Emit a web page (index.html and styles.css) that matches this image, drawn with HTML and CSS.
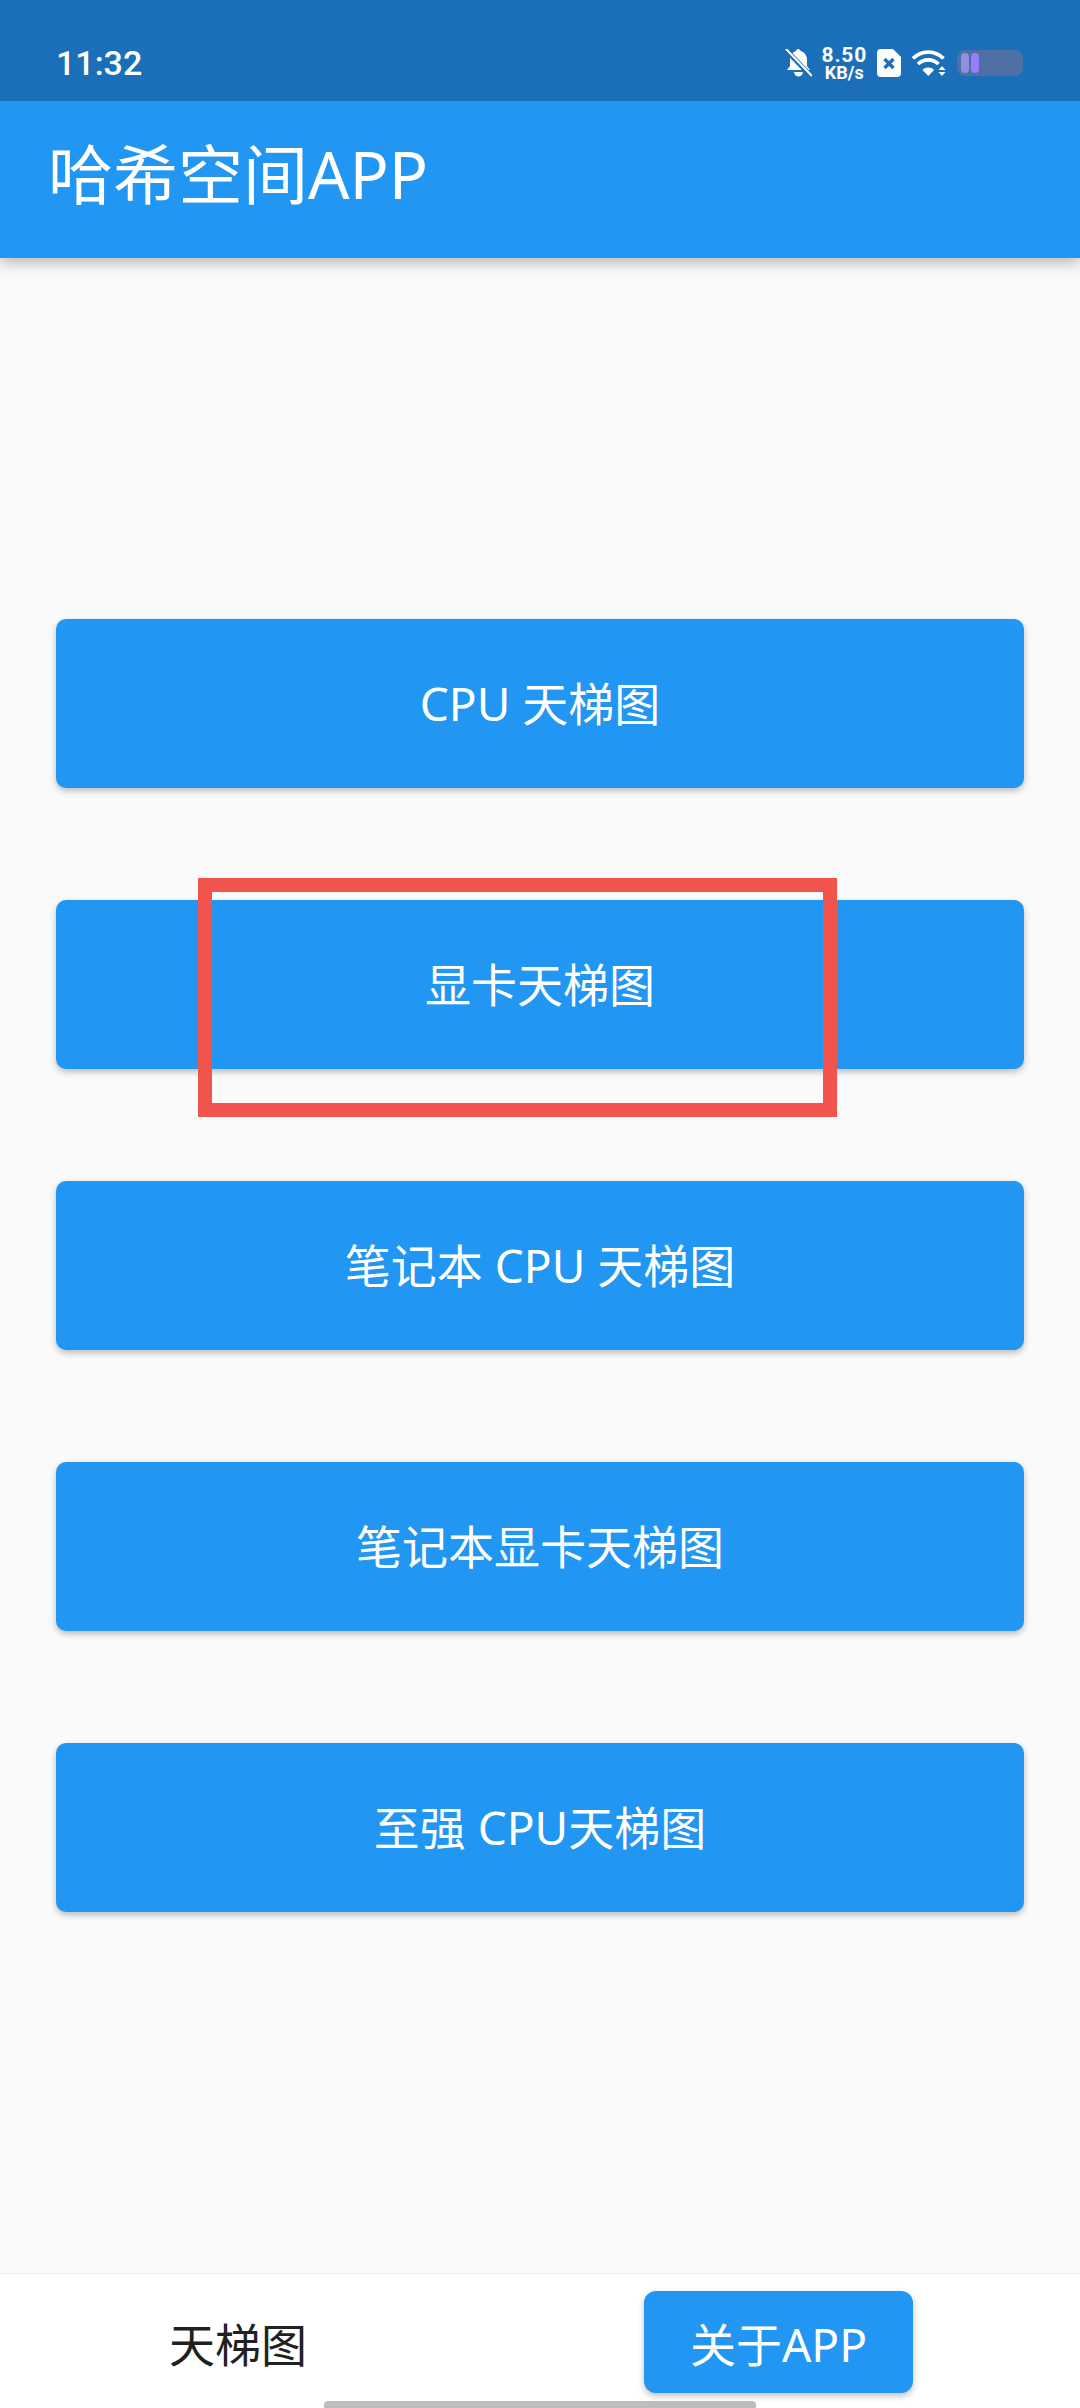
FILE: index.html
```html
<!DOCTYPE html>
<html lang="zh-CN">
<head>
  <meta charset="UTF-8">
  <meta name="viewport" content="width=device-width, initial-scale=1.0">
  <title>哈希空间APP</title>
  <link rel="stylesheet" href="styles.css">
</head>
<body>
  <div class="app">
    <header class="header">
      <div class="statusbar">
        <span class="time">11:32</span>
        <div class="status-icons">
          <svg class="ic-bell" width="27" height="28" viewBox="0 0 27 28">
            <path d="M13 0c1.500 0 2.500 1 2.500 2 4 1 6.500 4.500 6.500 9v6l3 4H2l3-4v-6c0-4.500 2.500-8 6-9 0-1 1-2 2-2zM9 23h9c-.5 3-2.500 4.500-4.500 4.500S9.500 26 9 23z" fill="#fff"/>
            <path d="M1 1l25 26" stroke="#1a6fb8" stroke-width="5"/>
            <path d="M1 0l26 27" stroke="#fff" stroke-width="2"/>
          </svg>
          <div class="speed"><span class="speed-num">8.50</span><span class="speed-unit">KB/s</span></div>
          <svg class="ic-sim" width="24" height="28" viewBox="0 0 24 28">
            <path d="M4 0h12l8 8v16a4 4 0 0 1-4 4H4a4 4 0 0 1-4-4V4a4 4 0 0 1 4-4z" fill="#fff"/>
            <path d="M7.500 10l9 9M16.500 10l-9 9" stroke="#1a6fb8" stroke-width="3.400"/>
          </svg>
          <svg class="ic-wifi" width="36" height="28" viewBox="0 0 36 28">
            <path d="M2 9.500c8.500-8.500 22-8.500 30.500 0" fill="none" stroke="#fff" stroke-width="3.800"/>
            <path d="M7 15c5.500-5.500 15-5.500 20.500 0" fill="none" stroke="#fff" stroke-width="3.800"/>
            <path d="M11.500 21c3-3.200 8.500-3.200 11.500 0l-5.700 6z" fill="#fff"/>
            <path d="M27.500 21l3.500-4 3.500 4zM27.500 23h7l-3.500 4z" fill="#fff"/>
          </svg>
          <div class="battery">
            <span class="battery-cell"></span>
            <span class="battery-cell battery-cell-on"></span>
          </div>
        </div>
      </div>
      <div class="toolbar">哈希空间APP</div>
    </header>

    <main class="content">
      <button class="btn" type="button">CPU 天梯图</button>
      <button class="btn" type="button">显卡天梯图</button>
      <button class="btn" type="button">笔记本 CPU 天梯图</button>
      <button class="btn" type="button">笔记本显卡天梯图</button>
      <button class="btn" type="button">至强 CPU天梯图</button>
      <div class="highlight"></div>
    </main>

    <nav class="bottom-nav">
      <div class="tab">天梯图</div>
      <div class="tab-active">关于APP</div>
      <div class="home-bar"></div>
    </nav>
  </div>
</body>
</html>
```

FILE: styles.css
```css
* {
  box-sizing: border-box;
}

body {
  margin: 0;
  background-color: #fafafa;
  font-family: "Noto Sans", "Noto Sans CJK SC", sans-serif;
}

.app {
  width: 1080px;
  height: 2408px;
  display: flex;
  flex-direction: column;
  overflow: hidden;
}

.header {
  height: 258px;
  background-color: #2196f3;
  box-shadow: 0 4px 14px rgba(0, 0, 0, 0.3);
  position: relative;
  z-index: 1;
  color: #fff;
}

.statusbar {
  height: 101px;
  background-color: #1a6fb8;
  display: flex;
  align-items: center;
  justify-content: space-between;
  padding: 25px 57px 0 56px;
}

.time {
  font-family: Roboto, sans-serif;
  font-size: 34px;
  font-weight: 500;
}

.status-icons {
  display: flex;
  align-items: center;
}

.ic-bell {
  margin-right: 10px;
}

.speed {
  display: flex;
  flex-direction: column;
  align-items: center;
  font-family: Roboto, sans-serif;
  font-weight: 700;
  line-height: 1;
  margin-right: 10px;
}

.speed-num {
  font-size: 21px;
  letter-spacing: 0.8px;
}

.speed-unit {
  font-size: 18px;
  margin-top: -2px;
}

.ic-sim {
  margin-right: 10px;
}

.ic-wifi {
  margin-right: 10px;
}

.battery {
  width: 66px;
  height: 26px;
  background-color: #4e70a4;
  border-radius: 8px;
  display: flex;
  gap: 2px;
  padding: 3px 4px;
}

.battery-cell {
  width: 8px;
  background-color: #8f90e0;
  border-radius: 4px;
}

.battery-cell-on {
  background-color: #9b7bff;
}

.toolbar {
  height: 157px;
  padding-left: 48px;
  font-size: 65px;
  line-height: 146px;
}

.content {
  flex: 1;
  position: relative;
  display: flex;
  flex-direction: column;
  gap: 112px;
  padding: 361px 56px 0;
}

.btn {
  height: 169px;
  flex-shrink: 0;
  border: none;
  border-radius: 10px;
  background-color: #2196f3;
  color: #fff;
  font-family: inherit;
  font-size: 46px;
  padding-bottom: 6px;
  box-shadow: 0 3px 6px rgba(0, 0, 0, 0.25);
}

.highlight {
  position: absolute;
  left: 198px;
  top: 620px;
  width: 639px;
  height: 239px;
  border: 14px solid #f0544c;
}

.bottom-nav {
  height: 135px;
  background-color: #fff;
  border-top: 1px solid #eeeeee;
  display: flex;
  justify-content: space-between;
  padding: 17px 167px 0 169px;
  position: relative;
}

.tab {
  height: 102px;
  display: flex;
  align-items: center;
  font-size: 46px;
  color: #212121;
}

.tab-active {
  width: 269px;
  height: 102px;
  background-color: #2196f3;
  color: #fff;
  font-size: 46px;
  border-radius: 12px;
  display: flex;
  align-items: center;
  justify-content: center;
  box-shadow: 0 3px 6px rgba(0, 0, 0, 0.25);
}

.home-bar {
  position: absolute;
  left: 324px;
  bottom: 0;
  width: 432px;
  height: 7px;
  background-color: #bdbdbd;
  border-radius: 4px 4px 0 0;
}
```
